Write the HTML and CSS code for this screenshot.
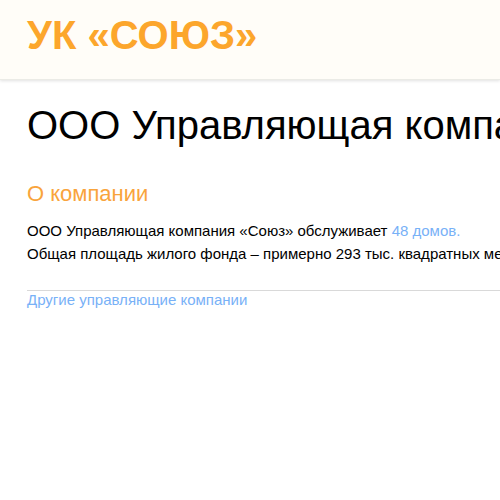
FILE: index.html
```html
<!DOCTYPE html>
<html lang="ru">
<head>
<meta charset="utf-8">
<link rel="stylesheet" href="styles.css">
</head>
<body>
<header class="header">
  <div class="container">
    <div class="logo">УК «СОЮЗ»</div>
  </div>
</header>
<main class="container main">
  <h1 class="title">ООО Управляющая компания «Союз»</h1>
  <h2 class="subtitle">О компании</h2>
  <p class="text">ООО Управляющая компания «Союз» обслуживает <a class="link" href="#">48 домов.</a></p>
  <p class="text">Общая площадь жилого фонда – примерно 293 тыс. квадратных метров.</p>
  <hr class="divider">
  <a class="link other" href="#">Другие управляющие компании</a>
</main>
</body>
</html>
```
FILE: styles.css
```css
html, body {
  margin: 0;
  padding: 0;
  overflow: hidden;
  background: #fff;
  font-family: "Liberation Sans", Arial, sans-serif;
  color: #000;
}
.container {
  width: 940px;
  padding: 0 27px;
}
.header {
  background: #fffdf8;
  height: 80px;
  box-shadow: 0 1px 3px rgba(0,0,0,0.12);
  border-bottom: 1px solid #ebebe6;
  box-sizing: border-box;
}
.logo {
  font-size: 40px;
  font-weight: bold;
  color: #fca62c;
  line-height: 1;
  padding-top: 15px;
  white-space: nowrap;
}
.main {
  padding-top: 22px;
}
.title {
  font-size: 40px;
  font-weight: normal;
  margin: 0;
  line-height: 46px;
  white-space: nowrap;
}
.subtitle {
  font-size: 22px;
  font-weight: normal;
  color: #f9a43c;
  margin: 33px 0 12px;
  line-height: 26px;
}
.text {
  font-size: 15px;
  margin: 0;
  line-height: 23px;
  white-space: nowrap;
}
.link {
  color: #78b1f7;
  text-decoration: none;
}
.divider {
  border: 0;
  border-top: 1px solid #d9d9d9;
  margin: 25px 0 0;
  height: 0;
}
.other {
  font-size: 15px;
  line-height: 18px;
}
```
